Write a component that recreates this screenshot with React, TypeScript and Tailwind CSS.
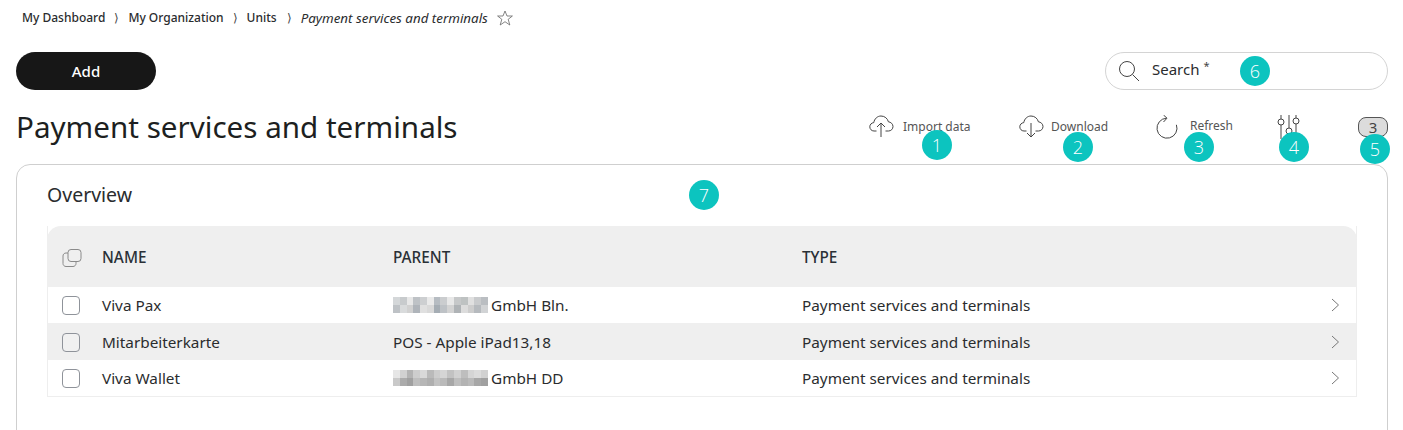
const rows = [
  {
    name: "Viva Pax",
    parent: "GmbH Bln.",
    mosaic: [
      "#dfe2e4", "#d2d6d8", "#f4f4f4", "#c8ccd0", "#d8dadc", "#f6f6f6", "#c0c6cc", "#d6d8da", "#f4f4f4", "#d0d2d4", "#c8cccc", "#ececec", "#d4d6d8", "#c4c8cc",
      "#c8ccd0", "#e4e6e8", "#dcdcdc", "#b8bec4", "#ececec", "#e4e4e4", "#aeb6be", "#c8ccd0", "#dedede", "#b8bcc0", "#e8e8e8", "#d8d8d8", "#c0c4c8", "#dcdee0",
    ],
  },
  { name: "Mitarbeiterkarte", parent: "POS - Apple iPad13,18", mosaic: [] },
  {
    name: "Viva Wallet",
    parent: "GmbH DD",
    mosaic: [
      "#f2f2f2", "#dcdcdc", "#bcbcbc", "#d8d8d8", "#e4e4e4", "#c4c4c4", "#d8d8d8", "#e0e0e0", "#cccccc", "#dcdcdc", "#c8c8c8", "#e0e0e0", "#e8e8e8", "#dcdcdc",
      "#d4d4d4", "#b4b4b4", "#a8a8a8", "#c8c8c8", "#c0c0c0", "#b8b8b8", "#cccccc", "#c4c4c4", "#b0b0b0", "#c8c8c8", "#bcbcbc", "#c4c4c4", "#b0b0b0", "#a8a8a8",
    ],
  },
];

function Badge({ n, className }: { n: number; className: string }) {
  return (
    <span
      className={`absolute flex h-[30px] w-[30px] items-center justify-center rounded-full bg-[#0cc4bf] font-['Open_Sans',sans-serif] text-[18px] font-light text-white ${className}`}
    >
      {n}
    </span>
  );
}

function Mosaic({ cells }: { cells: string[] }) {
  return (
    <span className="mr-[3px] grid h-[16px] w-[95px] grid-cols-[repeat(14,1fr)] blur-[0.7px] brightness-95">
      {cells.map((c, i) => (
        <span key={i} style={{ backgroundColor: c }} />
      ))}
    </span>
  );
}

function CloudIcon({ down }: { down?: boolean }) {
  return (
    <svg width="26" height="24" viewBox="0 0 26 24" fill="none" stroke="#444" strokeWidth="1" className="shrink-0">
      <path d="M8.5 16H6C3.5 16 1.8 14 1.8 11.8C1.8 9.6 3.5 7.8 5.8 7.6C6.4 3.8 9.4 1 13 1C16.8 1 19.6 3.6 20.4 6.8C22.8 7 25 9 25 11.5C25 14 23 16 20.5 16H17.5" />
      {down ? (
        <path d="M13 8V22M9 18L13 22L17 18" />
      ) : (
        <path d="M13 22V8M9 12L13 8L17 12" />
      )}
    </svg>
  );
}

export default function App() {
  return (
    <div className="relative h-[430px] w-[1403px] overflow-hidden bg-white font-['Noto_Sans',sans-serif] text-[#1d1f21]">
      {/* breadcrumb */}
      <div className="flex h-[36px] items-center pl-[22px] text-[12px] font-medium whitespace-nowrap text-[#2a2c2e]">
        <span>My Dashboard</span>
        <span className="mx-[9px] text-[#444]">⟩</span>
        <span>My Organization</span>
        <span className="mx-[9px] text-[#444]">⟩</span>
        <span>Units</span>
        <span className="mr-[9px] ml-[10px] text-[#444]">⟩</span>
        <span className="text-[13.35px] font-normal italic">Payment services and terminals</span>
        <svg width="16" height="16" viewBox="0 0 16 16" fill="none" stroke="#666" strokeWidth="0.8" className="ml-[9px]">
          <path d="M8 1L10 6H15.4L11.2 9.3L12.8 15L8 11.7L3.2 15L4.8 9.3L0.6 6H6Z" />
        </svg>
      </div>

      {/* add + search */}
      <div className="mt-[16px] flex h-[38px] items-center justify-between pl-[16px] pr-[15px]">
        <button className="h-[38px] w-[140px] rounded-full bg-[#171717] text-[15px] font-medium text-white">Add</button>
        <div className="flex h-[38px] w-[283px] items-center rounded-full border border-[#d4d4d4] pl-[12px]">
          <svg width="22" height="22" viewBox="0 0 22 22" fill="none" stroke="#444" strokeWidth="1">
            <circle cx="9" cy="9" r="7.5" />
            <path d="M14.5 14.5L21 21" />
          </svg>
          <span className="mb-[3px] ml-[12px] text-[15px] text-[#2a2c2e]">Search</span>
          <span className="mb-[10px] ml-[4px] text-[11px] text-[#444]">*</span>
        </div>
      </div>

      {/* title + toolbar */}
      <div className="mt-[17px] flex h-[40px] items-center pl-[16px]">
        <h1 className="w-[852px] text-[29.6px] leading-[40px] font-normal whitespace-nowrap text-[#1d1f21]">Payment services and terminals</h1>
        <div className="flex items-center text-[12px] whitespace-nowrap text-[#555]">
          <CloudIcon />
          <span className="ml-[9px] w-[67px]">Import data</span>
          <span className="ml-[48px]">
            <CloudIcon down />
          </span>
          <span className="ml-[7px] w-[57px]">Download</span>
          <svg width="24" height="24" viewBox="0 0 24 24" fill="none" stroke="#444" strokeWidth="1" className="ml-[47px]">
            <path d="M11.5 3.2A10 10 0 1 0 21.4 9.8" />
            <path d="M8.5 0L12 3.2L8.5 7" />
          </svg>
          <span className="mb-[2px] ml-[11px] w-[43px]">Refresh</span>
          <svg width="26" height="24" viewBox="0 0 26 24" fill="none" stroke="#444" strokeWidth="1" className="ml-[43px]">
            <path d="M5 0V4M5 10V24M13 0V13M13 19V24M20 0V3M20 9V24" />
            <circle cx="5" cy="7" r="3" />
            <circle cx="13" cy="16" r="3" />
            <circle cx="20" cy="6" r="3" />
          </svg>
          <span className="ml-[56px] flex h-[20px] w-[30px] items-center justify-center rounded-[8px] border border-[#555] bg-[#dcdcdc] text-[15px] text-[#444]">3</span>
        </div>
      </div>

      {/* card */}
      <div className="mt-[17px] ml-[16px] h-[300px] w-[1372px] rounded-[14px] border border-[#cfcfcf] px-[30px] pt-[17px]">
        <h2 className="h-[44px] text-[19.5px] leading-[26px] font-normal text-[#2a2c2e]">Overview</h2>
        <div className="w-[1310px] border-r border-b border-l border-[#eeeeee]">
          <div className="-mx-px flex h-[61px] items-center rounded-t-[14px] bg-[#efefef] pt-[2px] text-[15.3px] font-medium text-[#2a3036]">
            <span className="flex w-[55px] pl-[15px]">
              <svg width="20" height="20" viewBox="0 0 20 20" fill="none" stroke="#8a8a8a" strokeWidth="1">
                <rect x="6" y="1.5" width="13" height="12" rx="3" />
                <path d="M6 5H4C2.3 5 1 6.3 1 8V15.5C1 17.2 2.3 18.5 4 18.5H11C12.7 18.5 14 17.2 14 15.5V13.5" />
              </svg>
            </span>
            <span className="w-[291px]">NAME</span>
            <span className="w-[409px]">PARENT</span>
            <span>TYPE</span>
          </div>
          {rows.map((r, i) => (
            <div
              key={r.name}
              className={`flex items-center text-[15.3px] text-[#2a2c2e] ${i === 1 ? "h-[37px] bg-[#efefef] pt-[1px]" : "h-[36px]"}`}
            >
              <span className="flex w-[46px] justify-center">
                <span className="h-[19px] w-[18px] rounded-[4px] border border-[#8f939a] bg-white/10" />
              </span>
              <span className="ml-[8px] w-[291px]">{r.name}</span>
              <span className="flex w-[409px] items-center">
                {r.mosaic.length > 0 && <Mosaic cells={r.mosaic} />}
                {r.parent}
              </span>
              <span className="flex-1">Payment services and terminals</span>
              <svg width="10" height="14" viewBox="0 0 10 14" fill="none" stroke="#777" strokeWidth="1" className="mr-[16px]">
                <path d="M2 1L8.5 7L2 13" />
              </svg>
            </div>
          ))}
        </div>
      </div>

      {/* numbered annotations */}
      <Badge n={1} className="left-[922px] top-[130px]" />
      <Badge n={2} className="left-[1063px] top-[132px]" />
      <Badge n={3} className="left-[1184px] top-[132px]" />
      <Badge n={4} className="left-[1279px] top-[132px]" />
      <Badge n={5} className="left-[1360px] top-[134px]" />
      <Badge n={6} className="left-[1240px] top-[56px]" />
      <Badge n={7} className="left-[689px] top-[180px]" />
    </div>
  );
}
